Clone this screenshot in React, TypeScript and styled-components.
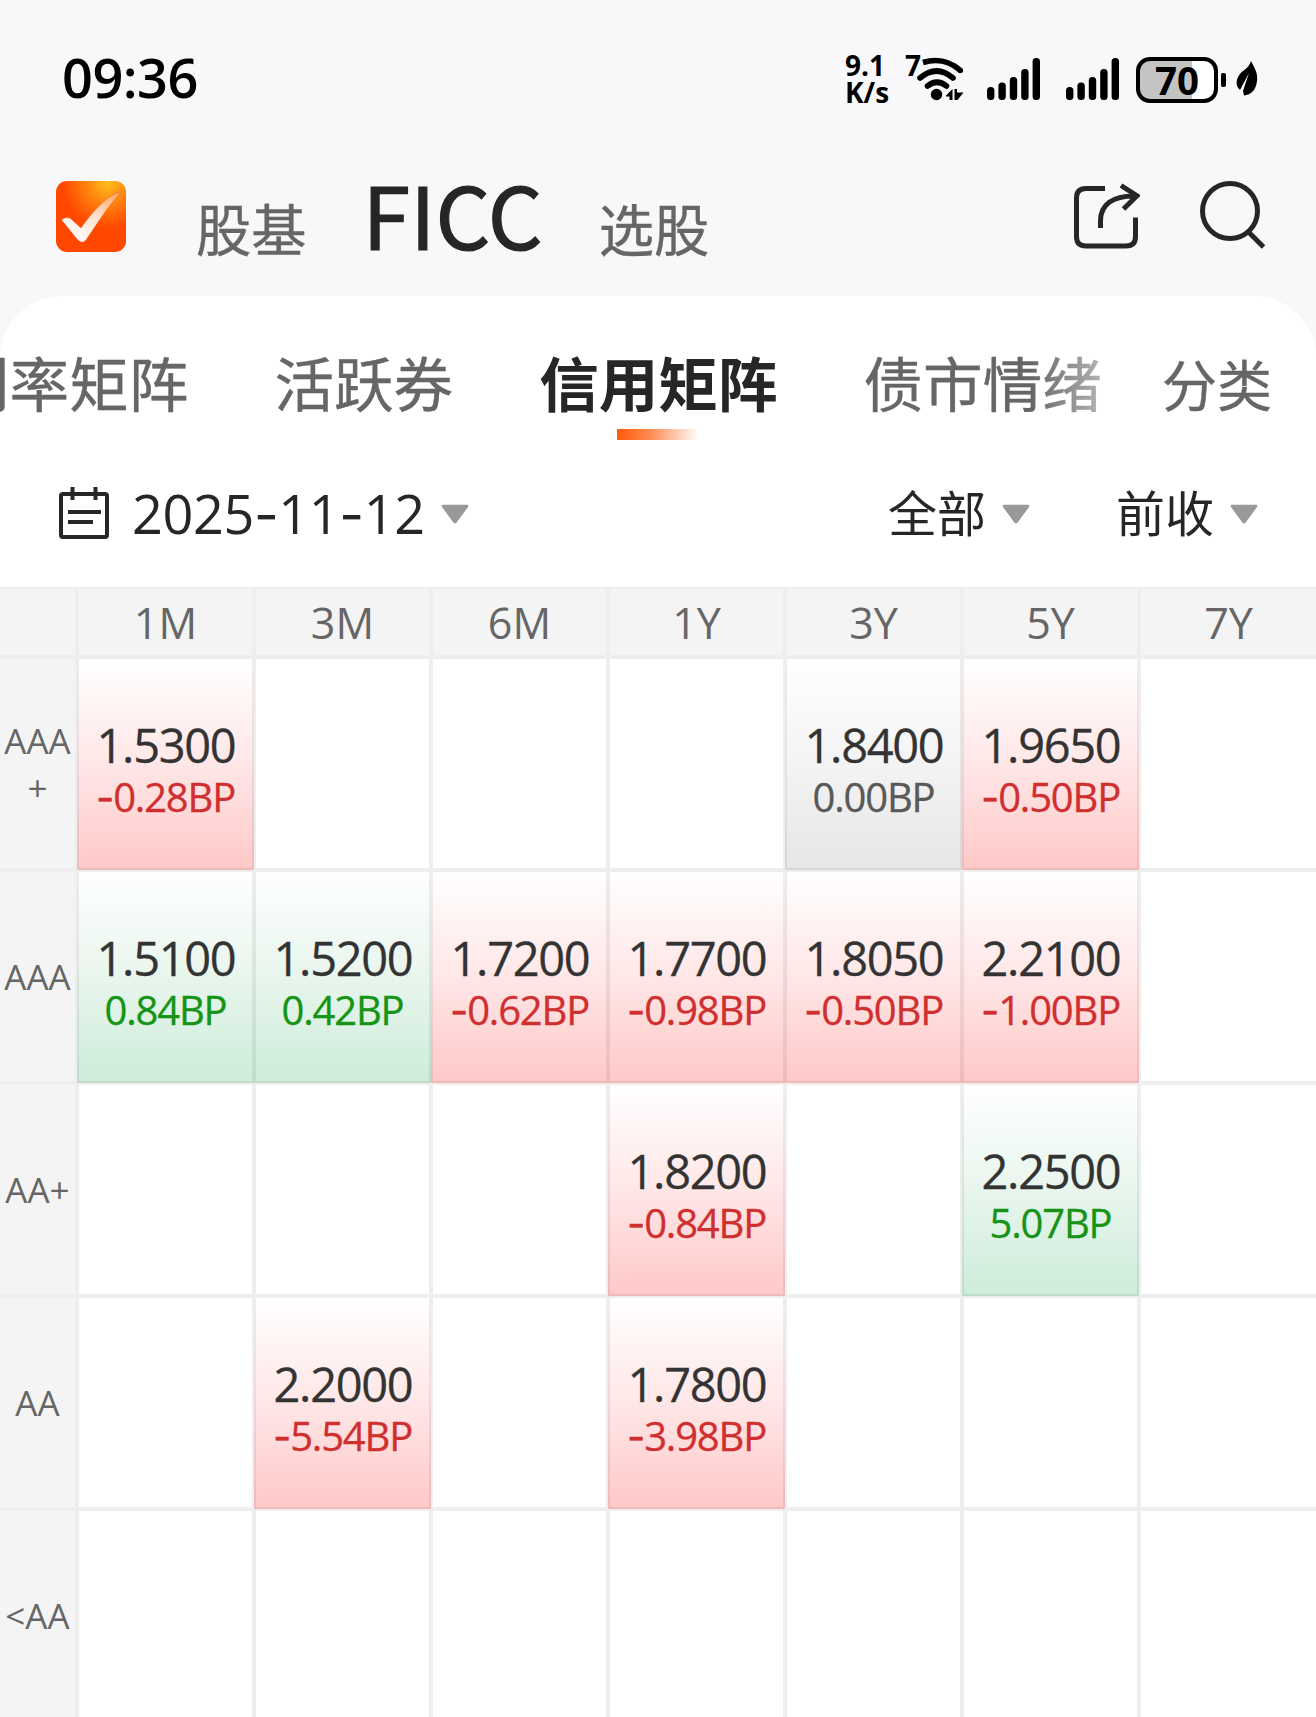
import React from "react";
import styled, { createGlobalStyle, css } from "styled-components";

const cjk = '"Noto Sans CJK SC", sans-serif';
const latin = '"Open Sans", "Noto Sans CJK SC", sans-serif';

const GlobalStyle = createGlobalStyle`
  * { box-sizing: border-box; }
  html, body { margin: 0; padding: 0; background: #f8f8fa; }
  body { overflow: hidden; }
`;

const Screen = styled.div`
  width: 1316px;
  height: 1717px;
  overflow: hidden;
  display: flex;
  flex-direction: column;
  background: #f8f8fa;
  font-family: ${cjk};
  color: #262626;
  white-space: nowrap;
`;

const StatusBar = styled.header`
  height: 156px;
  flex: none;
  display: flex;
  align-items: flex-start;
  justify-content: space-between;
  padding: 49px 58px 0 62px;
  color: #000;
  font-family: ${latin};
`;

const Clock = styled.div`
  font-size: 54px;
  line-height: 56px;
  font-weight: 600;
  letter-spacing: -0.5px;
`;

const StatusIcons = styled.div`
  display: flex;
  height: 60px;
  padding-top: 1px;
`;

const NetSpeed = styled.div`
  width: 60px;
  padding-top: 2px;
  font-size: 28px;
  line-height: 27px;
  font-weight: 700;
`;

const WifiBox = styled.div`
  width: 82px;
  display: flex;
`;

const WifiGen = styled.span`
  width: 12px;
  font-size: 28px;
  line-height: 30px;
  font-weight: 700;
`;

const WifiSvg = styled.svg`
  width: 50px;
  height: 48px;
  margin-top: 5px;
`;

const SignalSvg = styled.svg`
  width: 54px;
  height: 42px;
  margin: 8px 25px 0 0;
`;

const Battery = styled.div`
  width: 82px;
  height: 46px;
  margin: 7px 3px 0 -9px;
  border: 4px solid #000;
  border-radius: 14px;
  background: linear-gradient(90deg, #c4c4c5 0 52px, #fff 52px);
  display: flex;
  align-items: center;
  justify-content: center;
  font-size: 38.5px;
  line-height: 36px;
  padding-bottom: 1px;
  font-weight: 700;
`;

const BatteryTip = styled.div`
  width: 5px;
  height: 14px;
  margin: 23px 10px 0 0;
  border-radius: 2px;
  background: #000;
`;

const LeafSvg = styled.svg`
  width: 22px;
  height: 36px;
  margin-top: 11px;
`;

const TitleBar = styled.nav`
  height: 140px;
  flex: none;
  display: flex;
  padding: 0 50px 0 56px;
`;

const LogoSvg = styled.svg`
  width: 70px;
  height: 71px;
  margin: 25px 70px 0 0;
`;

const Section = styled.span<{ $active?: boolean }>`
  font-size: 55.3px;
  line-height: 60px;
  padding-top: 41px;
  color: #666;
  -webkit-text-stroke: 0.4px currentColor;
  ${(p) =>
    p.$active &&
    css`
      font-size: 86px;
      line-height: 90px;
      padding-top: 12px;
      margin: 0 56px 0 56px;
      letter-spacing: 0.1px;
      color: #262626;
      -webkit-text-stroke: 1.2px #262626;
    `}
`;

const Spacer = styled.div`
  flex: 1;
`;

const ActionSvg = styled.svg`
  width: 68px;
  height: 72px;
  margin: 22px 0 0 58px;
`;

const Card = styled.main`
  flex: 1;
  display: flex;
  flex-direction: column;
  background: #fff;
  border-radius: 62px 62px 0 0;
  overflow: hidden;
`;

const TabBar = styled.div`
  height: 150px;
  flex: none;
  display: flex;
  align-items: flex-start;
  padding-top: 51px;
`;

const TabScroller = styled.div`
  width: 1101px;
  height: 96px;
  flex: none;
  display: flex;
  gap: 86px;
  overflow: hidden;
  mask-image: linear-gradient(90deg, #000 1030px, rgba(0, 0, 0, 0.5) 1101px);
`;

const Tab = styled.div<{ $active?: boolean }>`
  flex: none;
  display: flex;
  flex-direction: column;
  align-items: center;
  font-size: 59.6px;
  line-height: 68px;
  color: ${(p) => (p.$active ? "#262626" : "#666")};
  font-weight: ${(p) => (p.$active ? 700 : 400)};
  -webkit-text-stroke: ${(p) => (p.$active ? "0" : "0.4px currentColor")};
  &:first-child {
    margin-left: -50px;
  }
`;

const TabMark = styled.i`
  width: 82px;
  height: 11px;
  margin-top: 14px;
  background: linear-gradient(90deg, #ff5a08, #ff8a50 40%, rgba(255, 150, 100, 0));
`;

const Category = styled.div`
  margin-left: 61px;
  font-size: 55px;
  line-height: 70px;
  color: #666;
  -webkit-text-stroke: 0.4px currentColor;
`;

const FilterBar = styled.div`
  height: 141px;
  flex: none;
  display: flex;
  align-items: flex-start;
  padding: 34px 58px 0 58px;
`;

const CalendarSvg = styled.svg`
  width: 52px;
  height: 54px;
  margin: 6px 22px 0 0;
`;

const DateText = styled.span`
  font-family: ${latin};
  font-size: 54px;
  line-height: 66px;
  letter-spacing: -0.4px;
  width: 309px;
`;

/* Inter's hyphen is the wider, flatter stroke used in dates and deltas. */
const Hyphen = styled.span`
  font-family: Inter, sans-serif;
  line-height: 1;
`;

const FilterText = styled.span`
  width: 114px;
  font-size: 49px;
  line-height: 62px;
`;

const CaretSvg = styled.svg<{ $gap?: number }>`
  width: 28px;
  height: 20px;
  margin: 24px ${(p) => p.$gap ?? 0}px 0 0;
`;

const Matrix = styled.section`
  display: grid;
  grid-template-columns: 77px repeat(6, 177px) 179px;
  grid-template-rows: 70px repeat(5, 213px);
  font-family: ${latin};
`;

const HeadCell = styled.div`
  border: solid rgba(0, 0, 0, 0.025);
  border-width: 2px;
  background: #f4f4f4;
  color: #666;
  font-size: 43px;
  line-height: 64px;
  padding-top: 2px;
  text-align: center;
  &:first-child {
    border-left-width: 0;
  }
`;

const RatingCell = styled.div`
  border: solid rgba(0, 0, 0, 0.025);
  border-width: 2px 2px 2px 0;
  background: #f4f4f4;
  color: #666;
  font-size: 35px;
  line-height: 47px;
  display: flex;
  flex-direction: column;
  align-items: center;
  justify-content: center;
`;

type Tone = "down" | "up" | "flat";

const fills: Record<Tone, string> = {
  down: "linear-gradient(#fff, #ffe8e8 48%, #ffc8c8)",
  up: "linear-gradient(#fff, #e9f6ee 48%, #cdecd9)",
  flat: "linear-gradient(#fff, #f4f4f4 48%, #e6e6e6)",
};

const inks: Record<Tone, string> = { down: "#d02f2f", up: "#159415", flat: "#595959" };

const QuoteCell = styled.div<{ $tone?: Tone }>`
  border: 2px solid rgba(0, 0, 0, 0.065);
  background: ${(p) => (p.$tone ? fills[p.$tone] : "#fff")};
  background-origin: border-box;
  display: flex;
  flex-direction: column;
  align-items: center;
  padding-top: 58px;
`;

const Yield = styled.span`
  font-size: 47px;
  line-height: 56px;
  letter-spacing: -1.3px;
  padding-left: 1px;
  color: #333;
  -webkit-text-stroke: 0.3px currentColor;
`;

const Change = styled.span<{ $tone: Tone }>`
  font-size: 40px;
  line-height: 46px;
  padding-top: 1px;
  letter-spacing: -1.2px;
  color: ${(p) => inks[p.$tone]};
  -webkit-text-stroke: 0.3px currentColor;
`;

const Signal = () => (
  <SignalSvg viewBox="0 0 54 42">
    {[29, 24.5, 19, 11, 0].map((top, i) => (
      <rect key={i} x={i * 11.4} y={top} width="7.4" height={42 - top} rx="3.5" />
    ))}
  </SignalSvg>
);

const Caret = ({ gap }: { gap?: number }) => (
  <CaretSvg viewBox="0 0 28 20" $gap={gap}>
    <path d="M2 0.8H26Q28 1 27 3L15.5 18.8Q14 20.4 12.5 18.8L1 3Q0 1 2 0.8Z" fill="#999" />
  </CaretSvg>
);

const Dashed = ({ text }: { text: string }) => (
  <>
    {text.split("-").map((part, i) => (
      <React.Fragment key={i}>
        {i > 0 && <Hyphen>-</Hyphen>}
        {part}
      </React.Fragment>
    ))}
  </>
);

const terms = ["1M", "3M", "6M", "1Y", "3Y", "5Y", "7Y"];

type Quote = [string, string] | null;

const rows: { rating: string[]; quotes: Quote[] }[] = [
  {
    rating: ["AAA", "+"],
    quotes: [["1.5300", "-0.28"], null, null, null, ["1.8400", "0.00"], ["1.9650", "-0.50"], null],
  },
  {
    rating: ["AAA"],
    quotes: [
      ["1.5100", "0.84"],
      ["1.5200", "0.42"],
      ["1.7200", "-0.62"],
      ["1.7700", "-0.98"],
      ["1.8050", "-0.50"],
      ["2.2100", "-1.00"],
      null,
    ],
  },
  { rating: ["AA+"], quotes: [null, null, null, ["1.8200", "-0.84"], null, ["2.2500", "5.07"], null] },
  { rating: ["AA"], quotes: [null, ["2.2000", "-5.54"], null, ["1.7800", "-3.98"], null, null, null] },
  { rating: ["<AA"], quotes: [null, null, null, null, null, null, null] },
];

const toneOf = (change: string): Tone =>
  Number(change) === 0 ? "flat" : Number(change) < 0 ? "down" : "up";

export default function App() {
  return (
    <Screen>
      <GlobalStyle />
      <StatusBar>
        <Clock>09:36</Clock>
        <StatusIcons>
          <NetSpeed>
            9.1
            <br />
            K/s
          </NetSpeed>
          <WifiBox>
            <WifiGen>7</WifiGen>
            <WifiSvg viewBox="0 0 50 48" fill="none" stroke="#000" strokeWidth="5.6">
              <path d="M6 7.500Q27 1 43.500 15.500" />
              <circle cx="43.300" cy="15.500" r="2.800" fill="#000" stroke="none" />
              <path d="M3 23Q19.500 9 36 23" strokeLinecap="round" />
              <path d="M10.500 31Q20 23.500 29.500 31" strokeLinecap="round" />
              <circle cx="19.500" cy="39.500" r="5.700" fill="#000" stroke="none" />
              <path
                d="M29 40.500L35.500 34V45H32.500V41.500H29ZM37.500 34H40V37.500H46.500L40.500 45H37.500Z"
                fill="#000"
                stroke="none"
              />
            </WifiSvg>
          </WifiBox>
          <Signal />
          <Signal />
          <Battery>70</Battery>
          <BatteryTip />
          <LeafSvg viewBox="0 0 22 36">
            <path d="M15 0C18 6 22 11 21 20C20 29 15 34 8 34.500L7 30L13 12L4 29C-1 25 0 18 4 13C7 9 13 7 15 0Z" />
          </LeafSvg>
        </StatusIcons>
      </StatusBar>

      <TitleBar>
        <LogoSvg viewBox="0 0 70 71">
          <defs>
            <radialGradient id="glow" cx="0.74" cy="0.02" r="0.65">
              <stop offset="0" stopColor="#ffc11c" />
              <stop offset="0.45" stopColor="#ff850e" />
              <stop offset="1" stopColor="#ff4700" />
            </radialGradient>
            <linearGradient id="tick" x1="0.2" y1="1" x2="0.95" y2="0">
              <stop offset="0" stopColor="#fff" />
              <stop offset="0.5" stopColor="#ffe2d2" />
              <stop offset="1" stopColor="#ffa35c" />
            </linearGradient>
          </defs>
          <rect width="70" height="71" rx="11" fill="url(#glow)" />
          <path
            d="M5.500 39Q9 35.500 14 37L25 47C36 31 49 17 62 11Q65 10 64 13C52 25 41 43 30 59Q25.500 64 21 58Z"
            fill="url(#tick)"
            stroke="#d93c00"
            strokeOpacity="0.35"
            strokeWidth="1"
          />
        </LogoSvg>
        <Section>股基</Section>
        <Section $active>FICC</Section>
        <Section>选股</Section>
        <Spacer />
        <ActionSvg viewBox="0 0 68 72" fill="none" stroke="#262626" strokeWidth="5">
          <path d="M33 10.500H14Q4.500 10.500 4.500 20V58.500Q4.500 68 14 68H54Q63.500 68 63.500 58.500V39.500" />
          <path d="M28.500 50V43C28.500 27 40 17.500 64 18M49 7.500L65 17.800L51.500 31" />
        </ActionSvg>
        <ActionSvg viewBox="0 0 68 72" fill="none" stroke="#262626" strokeWidth="5">
          <circle cx="32" cy="33" r="27.500" />
          <path d="M50.500 54L65.500 69" />
        </ActionSvg>
      </TitleBar>

      <Card>
        <TabBar>
          <TabScroller>
            <Tab>利率矩阵</Tab>
            <Tab>活跃券</Tab>
            <Tab $active>
              信用矩阵
              <TabMark />
            </Tab>
            <Tab>债市情绪</Tab>
          </TabScroller>
          <Category>分类</Category>
        </TabBar>

        <FilterBar>
          <CalendarSvg viewBox="0 0 52 54" fill="none" stroke="#262626" strokeWidth="4">
            <rect x="3" y="8" width="46" height="43" rx="2" />
            <path d="M14.500 1V14M37.500 1V14M10 26H43M10 36H35" />
          </CalendarSvg>
          <DateText>
            <Dashed text="2025-11-12" />
          </DateText>
          <Caret />
          <Spacer />
          <FilterText>全部</FilterText>
          <Caret gap={86} />
          <FilterText>前收</FilterText>
          <Caret />
        </FilterBar>

        <Matrix>
          <HeadCell />
          {terms.map((t) => (
            <HeadCell key={t}>{t}</HeadCell>
          ))}
          {rows.map((row) => (
            <React.Fragment key={row.rating.join("")}>
              <RatingCell>
                {row.rating.map((part) => (
                  <span key={part}>{part}</span>
                ))}
              </RatingCell>
              {row.quotes.map((q, i) =>
                q ? (
                  <QuoteCell key={i} $tone={toneOf(q[1])}>
                    <Yield>{q[0]}</Yield>
                    <Change $tone={toneOf(q[1])}>
                      <Dashed text={`${q[1]}BP`} />
                    </Change>
                  </QuoteCell>
                ) : (
                  <QuoteCell key={i} />
                )
              )}
            </React.Fragment>
          ))}
        </Matrix>
      </Card>
    </Screen>
  );
}
